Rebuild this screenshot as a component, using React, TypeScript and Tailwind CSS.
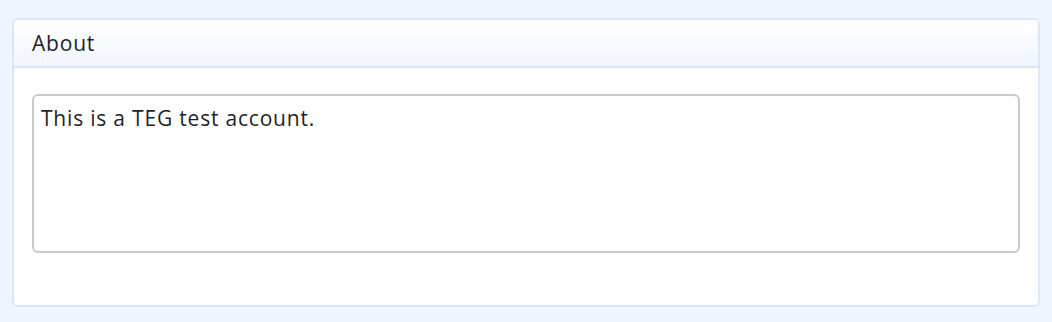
export default function App() {
  return (
    <div className="min-h-[322px] w-full bg-[#eef5fe] px-3 pt-[18px] pb-4 font-['Open_Sans',sans-serif]">
      <div className="rounded-[6px] border-2 border-[#d8e7fa] bg-white">
        {/* Header */}
        <div className="flex h-[48px] items-center rounded-t-[5px] border-b-2 border-[#d8e7fa] bg-gradient-to-b from-white to-[#f0f6fe] px-[18px]">
          <h2 className="text-[21px] leading-none tracking-[0.8px] text-[#1f2328]">About</h2>
        </div>
        {/* Body */}
        <div className="px-[18px] pt-[26px] pb-[52px]">
          <div className="h-[159px] rounded-[6px] border-2 border-[#c9c9c9] px-[7px] pt-[8px]">
            <p className="text-[21px] leading-[28px] tracking-[0.8px] text-[#1f2328]">This is a TEG test account.</p>
          </div>
        </div>
      </div>
    </div>
  );
}
